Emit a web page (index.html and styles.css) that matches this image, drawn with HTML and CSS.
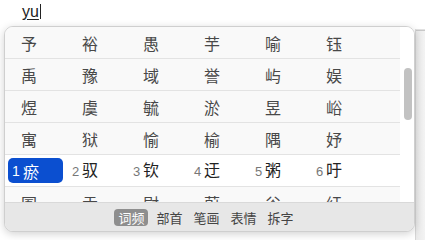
FILE: index.html
```html
<!DOCTYPE html>
<html lang="zh-CN">
<head>
    <meta charset="UTF-8">
    <title>输入法候选</title>
    <link rel="stylesheet" href="styles.css">
</head>
<body>
    <div class="page">
        <!-- Campo de texto -->
        <div class="editor">
            <span class="preedit">yu</span><span class="caret"></span>
        </div>
        <div class="side-strip"></div>
    </div>

    <!-- Painel de candidatos -->
    <div class="panel">
        <div class="list">
            <div class="rows">
                <div class="row"><span>予</span><span>裕</span><span>愚</span><span>芋</span><span>喻</span><span>钰</span></div>
                <div class="row"><span>禹</span><span>豫</span><span>域</span><span>誉</span><span>屿</span><span>娱</span></div>
                <div class="row"><span>煜</span><span>虞</span><span>毓</span><span>淤</span><span>昱</span><span>峪</span></div>
                <div class="row"><span>寓</span><span>狱</span><span>愉</span><span>榆</span><span>隅</span><span>妤</span></div>
                <div class="row current">
                    <span><b class="sel"><i class="num">1</i>瘀</b></span>
                    <span><i class="num">2</i>驭</span>
                    <span><i class="num">3</i>钦</span>
                    <span><i class="num">4</i>迂</span>
                    <span><i class="num">5</i>粥</span>
                    <span><i class="num">6</i>吁</span>
                </div>
                <div class="row"><span>圄</span><span>盂</span><span>尉</span><span>蔚</span><span>谷</span><span>纡</span></div>
            </div>
            <div class="track">
                <div class="thumb"></div>
            </div>
        </div>
        <div class="tabs">
            <span class="tab active">词频</span>
            <span class="tab">部首</span>
            <span class="tab">笔画</span>
            <span class="tab">表情</span>
            <span class="tab">拆字</span>
        </div>
    </div>
</body>
</html>
```

FILE: styles.css
```css
body {
    margin: 0;
    background-color: #fff;
    font-family: "Noto Sans CJK SC", "Noto Sans", sans-serif;
    color: #333;
}
.page {
    display: flex;
    height: 240px;
}
.editor {
    flex: 1;
    padding: 2px 0 0 22px;
    font-family: "Liberation Sans", Arial, sans-serif;
    font-size: 16px;
    line-height: 20px;
}
.preedit {
    text-decoration: underline;
    text-underline-offset: 2px;
    color: #222;
}
.caret {
    display: inline-block;
    width: 1px;
    height: 15px;
    background-color: #222;
    vertical-align: -2px;
    margin-left: 1px;
}
.side-strip {
    width: 9px;
    margin-top: 29px;
    background: linear-gradient(to right, #e9e9e9, #f3f3f3);
    border-left: 1px solid #d6d6d6;
    border-top: 1px solid #e2e2e2;
    box-shadow: inset 0 40px 0 -39px #c8c8c8;
}
.panel {
    position: absolute;
    top: 26px;
    left: 4px;
    width: 409px;
    height: 204px;
    border: 1px solid #cfcfcf;
    border-radius: 9px;
    overflow: hidden;
    background-color: #fff;
    box-shadow: 0 2px 8px rgba(0, 0, 0, 0.18);
    display: flex;
    flex-direction: column;
}
.list {
    display: flex;
    height: 175px;
    overflow: hidden;
}
.rows {
    width: 395px;
    background-color: #f9f9f9;
}
.row {
    display: grid;
    grid-template-columns: repeat(6, 61px);
    padding-left: 16px;
    height: 31px;
    align-items: center;
    border-bottom: 1px solid #e3e3e3;
    font-size: 16px;
    line-height: 20px;
    color: #484848;
}
.row span {
    white-space: nowrap;
}
.row.current {
    background-color: #fff;
    color: #222;
}
.num {
    font-style: normal;
    font-family: "Liberation Sans", Arial, sans-serif;
    font-size: 13px;
    color: #777;
    display: inline-block;
    width: 10px;
    margin-left: -10px;
}
.sel {
    font-weight: normal;
    display: inline-flex;
    align-items: center;
    width: 51px;
    height: 25px;
    margin-left: -13px;
    padding-left: 4px;
    border-radius: 5px;
    background-color: #0b4fd0;
    color: #fff;
}
.sel .num {
    color: #fff;
    margin-left: 0;
    width: 11px;
    font-size: 14px;
}
.track {
    width: 14px;
    background-color: #fff;
}
.thumb {
    width: 8px;
    height: 52px;
    margin: 41px 0 0 4px;
    border-radius: 4px;
    background-color: #c2c2c2;
}
.tabs {
    flex: 1;
    display: flex;
    justify-content: center;
    align-items: center;
    gap: 5px;
    padding-right: 8px;
    background-color: #e7e7e7;
    border-top: 1px solid #d9d9d9;
}
.tab {
    padding: 0 3px;
    height: 17px;
    line-height: 17px;
    font-size: 13px;
    color: #444;
    border-radius: 4px;
}
.tab.active {
    background-color: #8e8e8e;
    color: #fff;
    padding: 0 4px;
}
```
